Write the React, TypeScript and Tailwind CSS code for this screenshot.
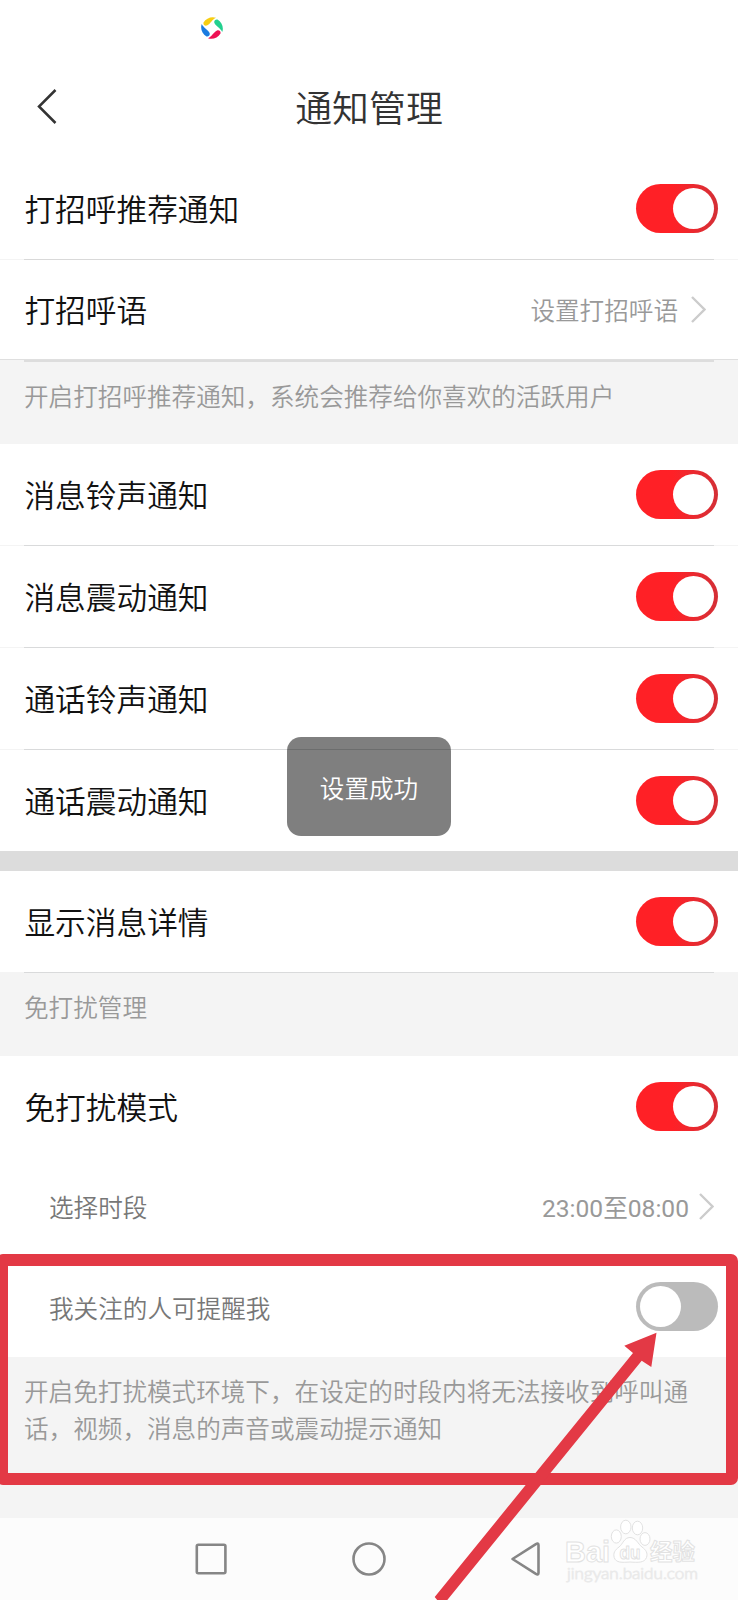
import React from 'react';

const Toggle = ({ on = true }: { on?: boolean }) => (
  <div
    className={
      on
        ? 'flex h-[49px] w-[82px] shrink-0 items-center justify-end rounded-full bg-linear-to-r from-[#ff2026] from-45% to-[#d42f36] pr-1'
        : 'flex h-[49px] w-[82px] shrink-0 items-center rounded-full bg-[#bbbbbb] pl-1'
    }
  >
    <div className="size-[41px] rounded-full bg-white"></div>
  </div>
);

const Chevron = () => (
  <svg className="mb-0.5 h-[27px] w-[15px] shrink-0" viewBox="0 0 15 27" fill="none" stroke="#cccccc" strokeWidth="2.4">
    <path d="M1 1L13.5 13.5L1 26" />
  </svg>
);

const Divider = () => (
  <div className="h-px bg-[#f4f4f4] px-6">
    <div className="h-px bg-[#d9dadb]"></div>
  </div>
);

const Row = ({ label, children }: { label: string; children: React.ReactNode }) => (
  <div className="flex h-[101px] items-center justify-between bg-white pr-5 pb-px pl-[24.4px]">
    <span className="pt-[7px] text-[30.7px] leading-none text-[#111111]">{label}</span>
    {children}
  </div>
);

const messageRows = ['消息铃声通知', '消息震动通知', '通话铃声通知', '通话震动通知'];

const NavBar = () => (
  <div className="h-[82px] bg-[#fcfcfc]">
    <svg className="h-[82px] w-[738px]" viewBox="0 0 738 82" fill="none" stroke="#868686" strokeWidth="2.6" strokeLinejoin="round">
      <rect x="196.8" y="26.8" width="28.6" height="28.4" rx="1.5" />
      <circle cx="369" cy="41" r="15.5" />
      <path d="M512.5 41L535.5 26.3Q538.5 24.5 538.5 27V55Q538.5 57.5 535.5 55.7Z" />
      <g fill="#ffffff" stroke="#e2e2e2" strokeWidth="1">
        <text x="565" y="43.5" fontSize="30" fontWeight="700" fontFamily="Liberation Sans, sans-serif" textLength="45" lengthAdjust="spacingAndGlyphs">
          Bai
        </text>
        <ellipse cx="616.3" cy="18.5" rx="5" ry="6.6" />
        <ellipse cx="625.8" cy="9" rx="5.2" ry="6.8" />
        <ellipse cx="637.5" cy="10" rx="5.2" ry="6.8" />
        <ellipse cx="645" cy="21" rx="5" ry="6.4" />
        <path d="M630 19.5C636 19.5 638 26 642 29C646 32 648 35 646.5 39.5C644.5 45 638 44.5 630 44C622 44.5 616 45 614.2 39.5C613 35 615 32 619 29C623 26 624 19.5 630 19.5Z" />
        <text x="619.5" y="40.5" fontSize="19" fontWeight="700" fontFamily="Liberation Sans, sans-serif" textLength="21" lengthAdjust="spacingAndGlyphs">
          du
        </text>
        <text x="650" y="41.5" fontSize="22.5" fontWeight="700" fontFamily="Noto Sans CJK SC, sans-serif">
          经验
        </text>
      </g>
      <text x="567" y="60.5" fill="#ffffff" stroke="#eaeaea" strokeWidth="0.9" fontSize="15" fontFamily="Lato, sans-serif" textLength="131" lengthAdjust="spacingAndGlyphs">
        jingyan.baidu.com
      </text>
    </svg>
  </div>
);

const App = () => {
  return (
    <div className="relative h-[1600px] w-[738px] overflow-hidden bg-white font-['Roboto','Noto_Sans_CJK_SC',sans-serif] font-[350]">
      <div className="h-14 pt-[17px] pl-[201px]">
        <svg className="size-[22px]" viewBox="0 0 22 22">
          <path d="M2.5 5.5C5 1 11 -1 15 .8C11 2.5 9.5 7 6 8.6C3.5 9.3 2 7.5 2.5 5.5Z" fill="#f7ce12" />
          <path d="M16.5 2.5C21 5 23 11 21.2 15C19.5 11 15 9.5 13.4 6C12.7 3.5 14.5 2 16.5 2.5Z" fill="#23d08f" />
          <path d="M19.5 16.5C17 21 11 23 7 21.2C11 19.5 12.5 15 16 13.4C18.5 12.7 20 14.5 19.5 16.5Z" fill="#ee1254" />
          <path d="M5.5 19.5C1 17 -1 11 .8 7C2.5 11 7 12.5 8.6 16C9.3 18.5 7.5 20 5.5 19.5Z" fill="#1b7be0" />
        </svg>
      </div>
      <div className="flex h-[102px] items-center pb-px pl-[37px]">
        <svg className="h-[35px] w-5 shrink-0" viewBox="0 0 20 35" fill="none" stroke="#333333" strokeWidth="2.5">
          <path d="M18.5 1L2 17.5L18.5 34" />
        </svg>
        <h1 className="grow pt-[7px] pr-[57px] text-center text-[36.9px] leading-none text-[#333333]">通知管理</h1>
      </div>

      <Row label="打招呼推荐通知">
        <Toggle />
      </Row>
      <div className="h-px bg-[#f4f4f4] px-6">
        <div className="h-px bg-[#d9d9d9]"></div>
      </div>
      <div className="flex h-[99px] items-center justify-between pr-8 pl-[24.4px]">
        <span className="pt-[5px] text-[30.7px] leading-none text-[#111111]">打招呼语</span>
        <div className="flex items-center gap-[13px] pt-px">
          <span className="pt-1 text-[24.6px] leading-none text-[#999999]">设置打招呼语</span>
          <Chevron />
        </div>
      </div>
      <div className="h-[85px] border-t border-[#dfdfdf] bg-[#f4f4f4] px-6">
        <div className="h-0.5 bg-[#dddddd]"></div>
        <p className="pt-6 text-[24.6px] leading-none whitespace-nowrap text-[#999999]">开启打招呼推荐通知，系统会推荐给你喜欢的活跃用户</p>
      </div>

      {messageRows.map((label, index) => (
        <React.Fragment key={label}>
          <Row label={label}>
            <Toggle />
          </Row>
          {index < messageRows.length - 1 && <Divider />}
        </React.Fragment>
      ))}
      <div className="h-5 bg-[#dcdcdc]"></div>
      <Row label="显示消息详情">
        <Toggle />
      </Row>
      <div className="h-[84px] bg-[#f4f4f4] px-6">
        <div className="h-px bg-[#d9dadb]"></div>
        <p className="pt-6 text-[24.6px] leading-none text-[#999999]">免打扰管理</p>
      </div>

      <Row label="免打扰模式">
        <Toggle />
      </Row>
      <div className="flex h-[100px] items-center justify-between pr-6 pl-[49px]">
        <span className="pt-[5px] text-[24.6px] leading-none text-[#777777]">选择时段</span>
        <div className="flex items-center gap-2.5">
          <span className="pt-1 text-[24.6px] leading-none font-normal text-[#999999]">23:00至08:00</span>
          <Chevron />
        </div>
      </div>
      <div className="flex h-[100px] items-center justify-between pr-5 pb-px pl-[49px]">
        <span className="pt-[7px] text-[24.6px] leading-none text-[#777777]">我关注的人可提醒我</span>
        <Toggle on={false} />
      </div>
      <div className="h-[161px] bg-[#f4f4f4] px-6 pt-[17px]">
        <p className="text-[24.6px] leading-[37px] whitespace-nowrap text-[#999999]">
          开启免打扰模式环境下，在设定的时段内将无法接收到呼叫通
          <br />
          话，视频，消息的声音或震动提示通知
        </p>
      </div>
      <NavBar />

      <div className="absolute top-[737px] left-[287px] flex h-[99px] w-[164px] items-center justify-center rounded-[14px] bg-black/50 pt-[7px] text-[24.6px] leading-none text-white">
        设置成功
      </div>
      {/* highlight frame and arrow */}
      <svg className="absolute top-[1250px] left-0 h-[350px] w-[738px]" viewBox="0 1250 738 350">
        <rect x="2" y="1260" width="730" height="219" rx="1" fill="none" stroke="#e33945" strokeWidth="12" strokeLinejoin="round" />
        <path d="M656.5 1332.8L624.3 1345.7L633 1353L434.7 1597L438 1601H446.5L641.7 1360.7L651.3 1367Z" fill="#e33945" />
      </svg>
    </div>
  );
};

export default App;
